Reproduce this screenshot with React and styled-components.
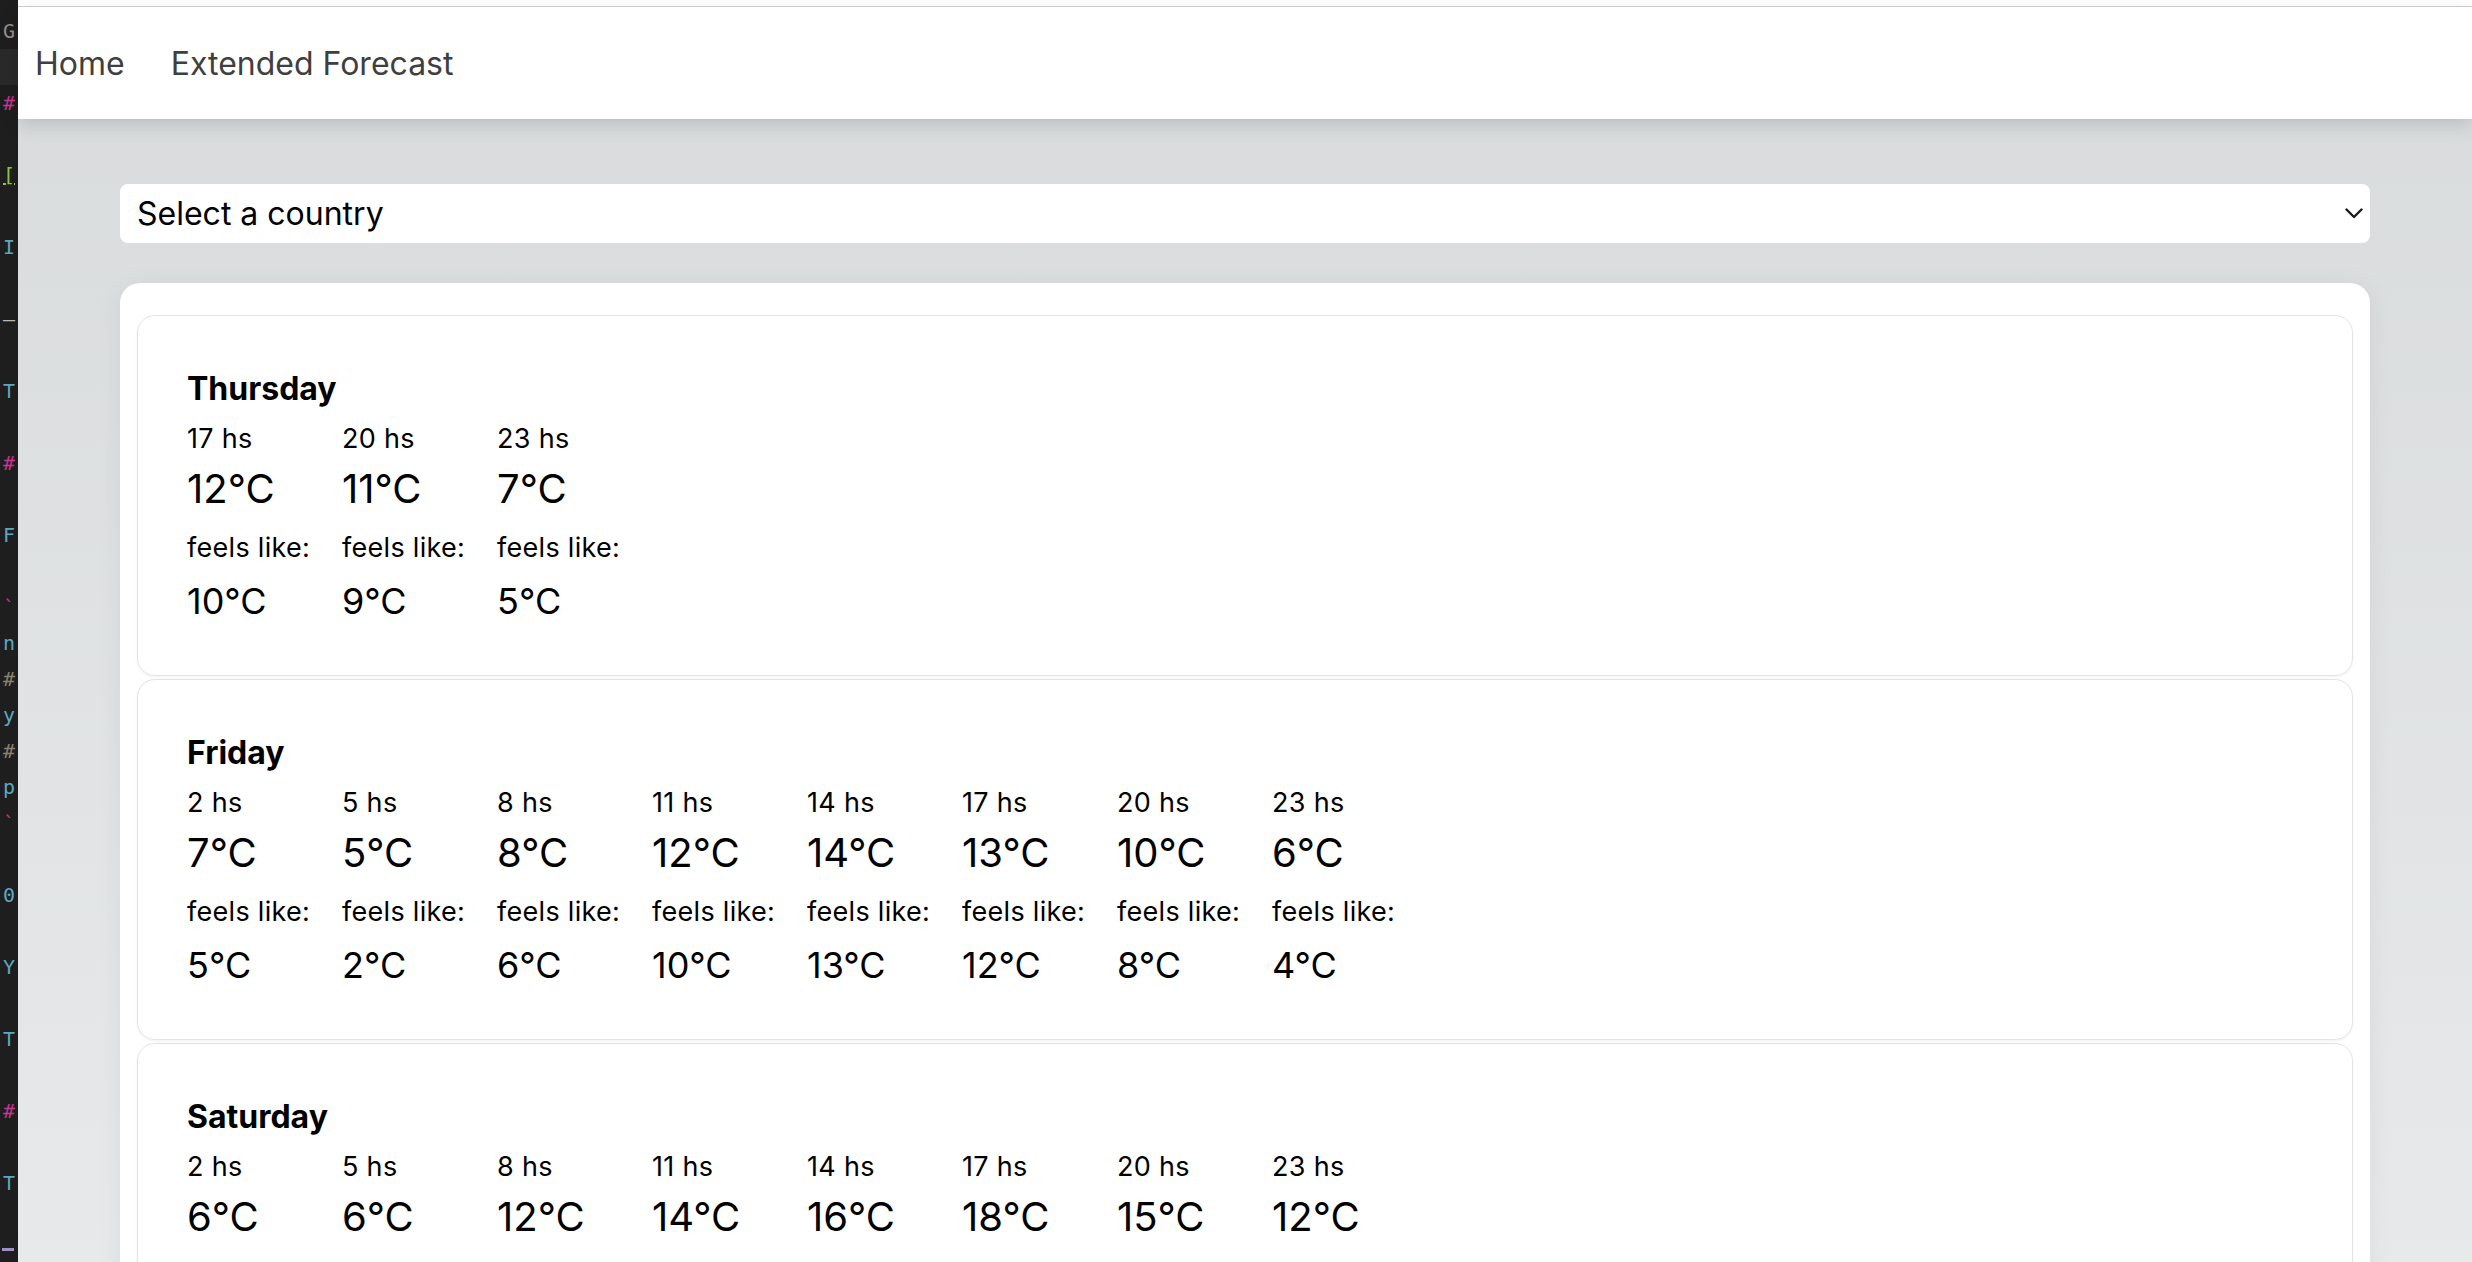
import React from 'react'
import styled, { createGlobalStyle } from 'styled-components'

const GlobalStyle = createGlobalStyle`
  html, body {
    margin: 0;
    padding: 0;
    height: 100%;
  }
  body {
    font-family: Inter, 'Noto Sans', sans-serif;
    background: #1e1e1e;
    overflow: hidden;
  }
`

const Screen = styled.div`
  display: flex;
  height: 100vh;
  overflow: hidden;
`

// sliver of the code editor window peeking in on the left
const EditorStrip = styled.div`
  width: 18px;
  flex-shrink: 0;
  background: #1e1e1e;
  padding-top: 13px;
  overflow: hidden;
  font-family: 'DejaVu Sans Mono', 'Liberation Mono', monospace;
  font-size: 20px;
`

const CodeLine = styled.div`
  height: 36px;
  line-height: 36px;
  padding-left: 3px;
  white-space: nowrap;
  color: ${(p) => p.$color || '#8f8f8f'};
  background: ${(p) => (p.$current ? '#2a2a2a' : 'transparent')};
  text-decoration: ${(p) => (p.$underline ? 'underline' : 'none')};
`

const CodeDash = styled.div`
  width: 12px;
  height: 3px;
  margin: 11px 0 0 2px;
  background: #9b8fc4;
`

const Browser = styled.div`
  flex: 1;
  display: flex;
  flex-direction: column;
  min-width: 0;
  background: linear-gradient(to bottom, #d8dbdc 0, #e7e9ea 1262px);
`

const ChromeEdge = styled.div`
  height: 6px;
  background: #fff;
  border-bottom: 1px solid #d2d2d2;
  flex-shrink: 0;
`

const NavBar = styled.nav`
  position: relative;
  z-index: 1;
  height: 112px;
  box-sizing: border-box;
  flex-shrink: 0;
  display: flex;
  align-items: center;
  gap: 46px;
  padding: 1px 0 0 17px;
  background: #fff;
  box-shadow: 0 6px 18px rgba(0, 0, 0, 0.14);
`

const NavLink = styled.a`
  font-size: 32px;
  line-height: 38px;
  color: #3f3f3f;
  text-decoration: none;
`

const Main = styled.main`
  padding: 65px 102px 0;
`

const CountrySelect = styled.div`
  height: 59px;
  box-sizing: border-box;
  display: flex;
  align-items: center;
  justify-content: space-between;
  padding: 0 7px 0 17px;
  background: #fff;
  border-radius: 8px;
  font-size: 32px;
  color: #000;
`

const ForecastPanel = styled.section`
  margin-top: 40px;
  padding: 32px 17px 17px;
  background: #fff;
  border-radius: 20px;
  box-shadow: 0 4px 28px rgba(0, 0, 0, 0.06);
`

const DayCard = styled.article`
  border: 1px solid #e3e3e8;
  border-radius: 18px;
  padding: 54px 49px 53px;
  margin-bottom: 3px;
  box-shadow: 0 1px 3px rgba(0, 0, 0, 0.06);
  color: #000;
`

const DayTitle = styled.h3`
  margin: 0 0 15px;
  font-size: 32px;
  line-height: 38px;
  font-weight: 700;
`

const Hours = styled.div`
  display: flex;
`

const Slot = styled.div`
  width: 155px;
  flex-shrink: 0;
  display: flex;
  flex-direction: column;
`

const SmallText = styled.span`
  font-size: 27px;
  line-height: ${(p) => p.$lh || 32}px;
  letter-spacing: 0.3px;
  margin-bottom: ${(p) => p.$after || 0}px;
`

const Temp = styled.span`
  font-size: ${(p) => (p.$feels ? 36 : 40)}px;
  line-height: ${(p) => (p.$feels ? 42 : 48)}px;
  margin-bottom: ${(p) => p.$after || 0}px;
`

const codeLines = [
  { i: 0, ch: 'G', color: '#8f8f8f' },
  { i: 1, ch: '', current: true },
  { i: 2, ch: '#', color: '#c8358f' },
  { i: 4, ch: '[', color: '#8cc43e', underline: true },
  { i: 6, ch: 'I', color: '#5aa8c2' },
  { i: 8, ch: '–', color: '#b8b8b8' },
  { i: 10, ch: 'T', color: '#5aa8c2' },
  { i: 12, ch: '#', color: '#c8358f' },
  { i: 14, ch: 'F', color: '#5aa8c2' },
  { i: 16, ch: '`', color: '#c8358f' },
  { i: 17, ch: 'n', color: '#5aa8c2' },
  { i: 18, ch: '#', color: '#8a8070' },
  { i: 19, ch: 'y', color: '#5aa8c2' },
  { i: 20, ch: '#', color: '#8a8070' },
  { i: 21, ch: 'p', color: '#5aa8c2' },
  { i: 22, ch: '`', color: '#c8358f' },
  { i: 24, ch: '0', color: '#5aa8c2' },
  { i: 26, ch: 'Y', color: '#5aa8c2' },
  { i: 28, ch: 'T', color: '#5aa8c2' },
  { i: 30, ch: '#', color: '#c8358f' },
  { i: 32, ch: 'T', color: '#5aa8c2' },
]

const forecast = [
  {
    day: 'Thursday',
    slots: [
      ['17', 12, 10],
      ['20', 11, 9],
      ['23', 7, 5],
    ],
  },
  {
    day: 'Friday',
    slots: [
      ['2', 7, 5],
      ['5', 5, 2],
      ['8', 8, 6],
      ['11', 12, 10],
      ['14', 14, 13],
      ['17', 13, 12],
      ['20', 10, 8],
      ['23', 6, 4],
    ],
  },
  {
    day: 'Saturday',
    slots: [
      ['2', 6],
      ['5', 6],
      ['8', 12],
      ['11', 14],
      ['14', 16],
      ['17', 18],
      ['20', 15],
      ['23', 12],
    ],
  },
]

function Chevron() {
  return (
    <svg width="18" height="11" viewBox="0 0 18 11" fill="none">
      <path
        d="M1.5 1.5 L9 9 L16.5 1.5"
        stroke="#1a1a1a"
        strokeWidth="2.4"
        strokeLinecap="round"
        strokeLinejoin="round"
      />
    </svg>
  )
}

function Editor() {
  const rows = Array.from({ length: 34 }, (_, n) => codeLines.find((l) => l.i === n))
  return (
    <EditorStrip>
      {rows.map((l, n) => (
        <CodeLine
          key={n}
          $color={l && l.color}
          $current={l && l.current}
          $underline={l && l.underline}
        >
          {l ? l.ch : ''}
        </CodeLine>
      ))}
      <CodeDash />
    </EditorStrip>
  )
}

export default function App() {
  return (
    <Screen>
      <GlobalStyle />
      <Editor />
      <Browser>
        <ChromeEdge />
        <NavBar>
          <NavLink href="#">Home</NavLink>
          <NavLink href="#">Extended Forecast</NavLink>
        </NavBar>
        <Main>
          <CountrySelect>
            <span>Select a country</span>
            <Chevron />
          </CountrySelect>
          <ForecastPanel>
            {forecast.map((d) => (
              <DayCard key={d.day}>
                <DayTitle>{d.day}</DayTitle>
                <Hours>
                  {d.slots.map(([h, t, f]) => (
                    <Slot key={h}>
                      <SmallText $after={10}>{h} hs</SmallText>
                      <Temp $after={22}>{t}°C</Temp>
                      {f !== undefined && (
                        <>
                          <SmallText $lh={26} $after={19}>
                            feels like:
                          </SmallText>
                          <Temp $feels>{f}°C</Temp>
                        </>
                      )}
                    </Slot>
                  ))}
                </Hours>
              </DayCard>
            ))}
          </ForecastPanel>
        </Main>
      </Browser>
    </Screen>
  )
}
